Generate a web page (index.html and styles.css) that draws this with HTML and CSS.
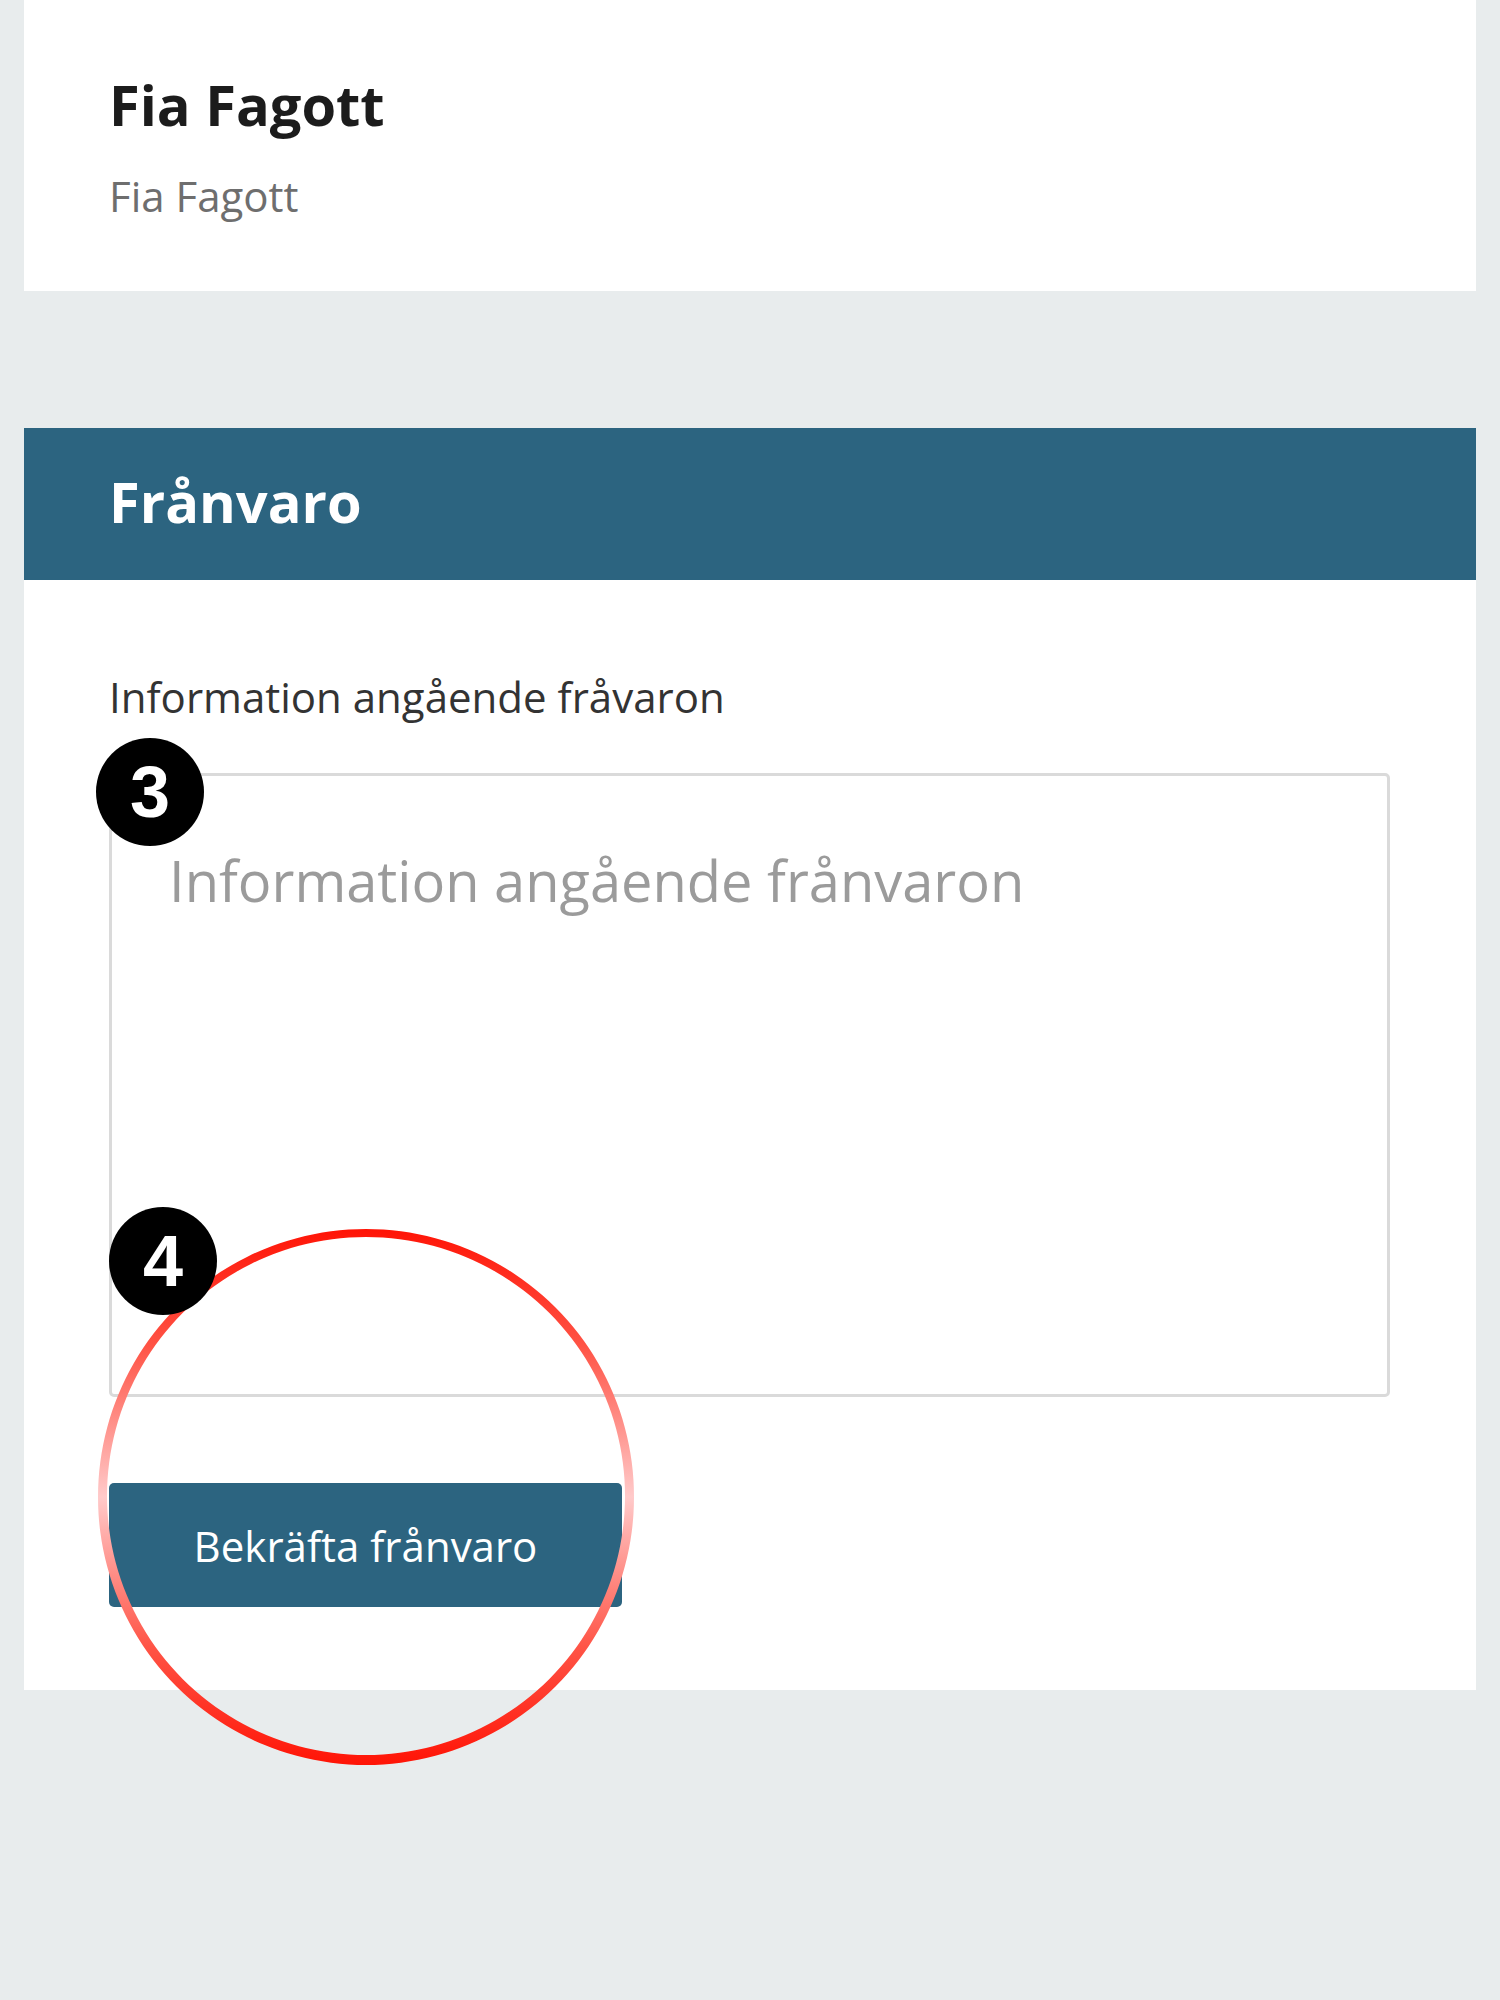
FILE: index.html
```html
<!DOCTYPE html>
<html lang="sv">
<head>
<meta charset="utf-8">
<title>Frånvaro</title>
<link rel="stylesheet" href="styles.css">
</head>
<body>
<div class="page">
  <section class="card profile">
    <h1 class="name">Fia Fagott</h1>
    <p class="subname">Fia Fagott</p>
  </section>

  <section class="card absence">
    <header class="card-header">
      <h2 class="card-title">Frånvaro</h2>
    </header>
    <div class="card-body">
      <label class="field-label" for="info">Information angående fråvaron</label>
      <textarea id="info" class="field-input" placeholder="Information angående frånvaron"></textarea>
      <button class="btn-primary" type="button">Bekräfta frånvaro</button>
    </div>
  </section>

  <svg class="highlight" width="560" height="560" viewBox="0 0 560 560" aria-hidden="true">
    <defs>
      <linearGradient id="ring" x1="0" y1="0" x2="0" y2="1">
        <stop offset="0" stop-color="#ff1406"/>
        <stop offset="0.22" stop-color="#ff5446"/>
        <stop offset="0.5" stop-color="#ffcaca"/>
        <stop offset="0.78" stop-color="#ff5446"/>
        <stop offset="1" stop-color="#ff1406"/>
      </linearGradient>
    </defs>
    <path fill="url(#ring)" fill-rule="evenodd"
      d="M280 12 a268 268 0 1 0 0.001 0 Z M280 20 a259 259 0 1 0 0.001 0 Z"/>
  </svg>

  <div class="badge badge-3">3</div>
  <div class="badge badge-4">4</div>
</div>
</body>
</html>
```

FILE: styles.css
```css
html, body {
  margin: 0;
  padding: 0;
  background: #e8eced;
}

body {
  font-family: "Open Sans", "Noto Sans", sans-serif;
  color: #333;
}

.page {
  position: relative;
  padding: 0 24px 310px;
  min-height: 2000px;
  box-sizing: border-box;
}

.card {
  background: #fff;
}

.profile {
  padding: 66px 88px 67px 85px;
}

.name {
  margin: 0;
  font-size: 56px;
  line-height: 76px;
  font-weight: 700;
  color: #1c1c1c;
}

.subname {
  margin: 25px 0 0;
  font-size: 42px;
  line-height: 57px;
  color: #6e6e6e;
}

.absence {
  margin-top: 137px;
}

.card-header {
  background: #2c6480;
  height: 152px;
  box-sizing: border-box;
  padding: 35px 87px 0 85px;
}

.card-title {
  margin: 0;
  font-size: 56px;
  line-height: 76px;
  font-weight: 700;
  color: #fff;
}

.card-body {
  display: flex;
  flex-direction: column;
  align-items: flex-start;
  padding: 88px 86px 83px 85px;
}

.field-label {
  font-size: 42px;
  line-height: 57px;
  color: #333;
}

.field-input {
  margin-top: 48px;
  width: 100%;
  height: 624px;
  box-sizing: border-box;
  border: 3px solid #dadada;
  border-radius: 5px;
  padding: 66px 50px 0 57px;
  font-family: "Open Sans", "Noto Sans", sans-serif;
  font-size: 56px;
  line-height: 76px;
  color: #333;
  resize: none;
  background: #fff;
  outline: none;
}

.field-input::placeholder {
  color: #9b9b9b;
  opacity: 1;
}

.btn-primary {
  margin-top: 86px;
  width: 513px;
  height: 124px;
  border: none;
  border-radius: 5px;
  background: #2c6480;
  color: #fff;
  font-family: "Open Sans", "Noto Sans", sans-serif;
  font-size: 42px;
  line-height: 57px;
  padding: 0;
}

.highlight {
  position: absolute;
  left: 86px;
  top: 1217px;
}

.badge {
  position: absolute;
  width: 108px;
  height: 108px;
  border-radius: 50%;
  background: #000;
  color: #fff;
  display: flex;
  align-items: center;
  justify-content: center;
  font-family: "Liberation Sans", Arial, sans-serif;
  font-weight: 700;
  font-size: 72px;
  line-height: 1;
}

.badge-3 {
  left: 96px;
  top: 738px;
}

.badge-4 {
  left: 109px;
  top: 1207px;
}
```
